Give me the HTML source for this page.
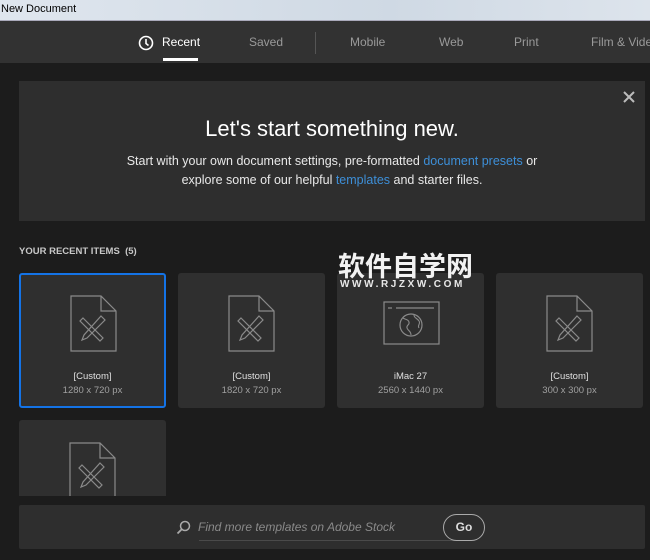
<!DOCTYPE html>
<html><head><meta charset="utf-8"><style>
*{margin:0;padding:0;box-sizing:border-box}
body{width:650px;height:560px;overflow:hidden;background:#1c1c1c;font-family:"Liberation Sans",sans-serif;position:relative}
.title{position:absolute;left:0;top:0;width:650px;height:21px;background:linear-gradient(90deg,#dfe6ee,#cfd9e4 60%,#dde4ec);color:#000;font-size:11px;line-height:18px;padding-left:1px;border-bottom:1px solid #aab}
.nav{position:absolute;top:21px;left:0;width:650px;height:42px;background:#323232}
.nav span{position:absolute;top:14px;font-size:12px;color:#9a9a9a;white-space:nowrap}
.nav .act{color:#fff}
.ul{position:absolute;top:38px;height:3px;background:#fff}
.banner{position:absolute;left:19px;top:81px;width:626px;height:140px;background:#2e2e2e;text-align:center;color:#fff}
.banner h1{font-weight:normal;font-size:22px;margin-top:35px}
.banner p{font-size:12.5px;line-height:19px;margin-top:10px;color:#e8e8e8}
.banner a{color:#3d8fd8}
.lbl{position:absolute;left:19px;top:246px;font-size:9.5px;color:#c8c8c8;font-weight:bold}
.card{position:absolute;width:147px;height:135px;background:#2f2f2f;border-radius:3px;text-align:center}
.card svg{position:absolute;left:50px;top:22px}
.card .n{position:absolute;top:98px;width:100%;font-size:9.5px;color:#e0e0e0}
.card .s{position:absolute;top:112px;width:100%;font-size:9.5px;color:#a0a0a0}
.sel{border:2px solid #1473e6}
.bot{position:absolute;left:19px;top:505px;width:626px;height:44px;background:#2e2e2e;border-radius:2px}
.wm{position:absolute;left:338px;top:250px;color:#f2f2f2;font-family:"Noto Sans CJK SC",sans-serif;font-size:27px;font-weight:bold;letter-spacing:0px;line-height:30px}
.wm2{position:absolute;left:340px;top:279px;color:#e8e8e8;font-size:10px;letter-spacing:2.6px;font-weight:bold}
</style></head><body>
<div class="title">New Document</div>
<div class="nav">
<svg style="position:absolute;left:138px;top:14px" width="16" height="16" viewBox="0 0 16 16"><circle cx="8" cy="8" r="6.5" fill="none" stroke="#fff" stroke-width="1.6"/><path d="M8 4v4.5l2.5 2" fill="none" stroke="#fff" stroke-width="1.6"/></svg>
<span class="act" style="left:162px">Recent</span>
<span style="left:249px">Saved</span>
<div style="position:absolute;left:315px;top:11px;width:1px;height:22px;background:#555"></div>
<span style="left:350px">Mobile</span>
<span style="left:439px">Web</span>
<span style="left:514px">Print</span>
<span style="left:591px">Film &amp; Video</span>
<div class="ul" style="left:163px;top:37px;width:35px"></div>
</div>
<div class="banner">
<svg style="position:absolute;right:10px;top:10px" width="12" height="12" viewBox="0 0 12 12"><path d="M1 1L11 11M11 1L1 11" stroke="#bbb" stroke-width="2"/></svg>
<h1>Let's start something new.</h1>
<p>Start with your own document settings, pre-formatted <a>document presets</a> or<br>explore some of our helpful <a>templates</a> and starter files.</p>
</div>
<div class="lbl">YOUR RECENT ITEMS &nbsp;(5)</div>

<div class="card sel" style="left:19px;top:273px"><svg width="47" height="57" style="left:49px;top:20px" viewBox="0 0 47 57"><path d="M1 1H31L46 16V56H1Z M31 1V16H46" fill="none" stroke="#8a8a8a" stroke-width="1.2"/><g fill="none" stroke="#8a8a8a" stroke-width="1.2"><path d="M13 23L33 43L30 46L10 26Z"/><path d="M31 21L35 25L17 43L12 45L14 40Z"/></g></svg><div class="n" style="top:96px">[Custom]</div><div class="s" style="top:110px">1280 x 720 px</div></div>
<div class="card" style="left:178px;top:273px"><svg width="47" height="57" viewBox="0 0 47 57"><path d="M1 1H31L46 16V56H1Z M31 1V16H46" fill="none" stroke="#8a8a8a" stroke-width="1.2"/><g fill="none" stroke="#8a8a8a" stroke-width="1.2"><path d="M13 23L33 43L30 46L10 26Z"/><path d="M31 21L35 25L17 43L12 45L14 40Z"/></g></svg><div class="n">[Custom]</div><div class="s">1820 x 720 px</div></div>
<div class="card" style="left:337px;top:273px"><svg width="57" height="44" style="left:46px;top:28px" viewBox="0 0 57 44"><rect x="1" y="1" width="55" height="42" fill="none" stroke="#8a8a8a" stroke-width="1.2"/><path d="M5 7H9M13 7H51" stroke="#8a8a8a" stroke-width="1.2"/><circle cx="28" cy="24" r="11" fill="none" stroke="#8a8a8a" stroke-width="1.2"/><path d="M20 17c3 2 5 1 6 4s-3 3-2 6 4 3 4 7M31 14c0 3 3 3 5 6s-2 4 0 7" fill="none" stroke="#8a8a8a" stroke-width="1.1"/></svg><div class="n">iMac 27</div><div class="s">2560 x 1440 px</div></div>
<div class="card" style="left:496px;top:273px"><svg width="47" height="57" viewBox="0 0 47 57"><path d="M1 1H31L46 16V56H1Z M31 1V16H46" fill="none" stroke="#8a8a8a" stroke-width="1.2"/><g fill="none" stroke="#8a8a8a" stroke-width="1.2"><path d="M13 23L33 43L30 46L10 26Z"/><path d="M31 21L35 25L17 43L12 45L14 40Z"/></g></svg><div class="n">[Custom]</div><div class="s">300 x 300 px</div></div>
<div class="card" style="left:19px;top:420px;height:76px;overflow:hidden;border-radius:3px 3px 0 0"><svg width="47" height="57" viewBox="0 0 47 57"><path d="M1 1H31L46 16V56H1Z M31 1V16H46" fill="none" stroke="#8a8a8a" stroke-width="1.2"/><g fill="none" stroke="#8a8a8a" stroke-width="1.2"><path d="M13 23L33 43L30 46L10 26Z"/><path d="M31 21L35 25L17 43L12 45L14 40Z"/></g></svg></div>

<div class="wm">软件自学网</div>
<div class="wm2">WWW.RJZXW.COM</div>

<div class="bot">
<svg style="position:absolute;left:157px;top:15px" width="15" height="15" viewBox="0 0 15 15"><circle cx="9" cy="6" r="4.5" fill="none" stroke="#aaa" stroke-width="1.5"/><path d="M6 9L1.5 13.5" stroke="#aaa" stroke-width="1.8"/></svg>
<div style="position:absolute;left:179px;top:15px;font-size:12px;font-style:italic;color:#8a8a8a">Find more templates on Adobe Stock</div>
<div style="position:absolute;left:180px;top:35px;width:258px;height:1px;background:#4a4a4a"></div>
<div style="position:absolute;left:424px;top:9px;width:42px;height:27px;border:1.5px solid #aaa;border-radius:14px;color:#ddd;font-size:12px;font-weight:bold;text-align:center;line-height:24px">Go</div>
</div>
</body></html>
